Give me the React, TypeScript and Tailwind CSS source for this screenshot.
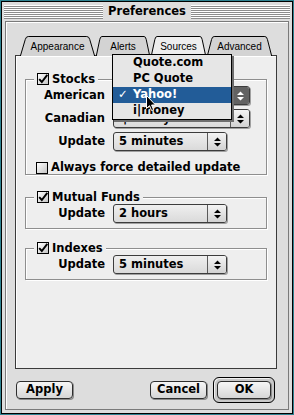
import clsx from "clsx";

const stripes =
  "h-[14px] flex-1 bg-[image:repeating-linear-gradient(to_bottom,#ffffff_0px,#ffffff_1px,#8c8c8c_1px,#8c8c8c_2px)]";

function Check({ on }: { on?: boolean }) {
  return (
    <span className="relative inline-flex h-[12px] w-[12px] shrink-0 border border-black bg-[linear-gradient(135deg,#ffffff,#c4c4c4)]">
      {on ? (
        <svg width="12" height="12" viewBox="0 0 12 12" className="absolute -left-[1px] -top-[1px]">
          <path d="M2.2 6.2 L4.8 9 L10.3 1.8" fill="none" stroke="#000" strokeWidth="1.9" />
        </svg>
      ) : null}
    </span>
  );
}

function Arrows({ light }: { light?: boolean }) {
  return (
    <svg width="7" height="10" viewBox="0 0 7 10">
      <path d="M0 4 L3.5 0.5 L7 4 Z M0 6 L3.5 9.5 L7 6 Z" fill={light ? "#ffffff" : "#000000"} />
    </svg>
  );
}

function Popup({ value, className, pressed }: { value?: string; className: string; pressed?: boolean }) {
  return (
    <div
      className={clsx(
        "flex h-[19px] overflow-hidden rounded-[3px] border border-[#3c3c3c] bg-[linear-gradient(#efefef,#dadada)] shadow-[1px_1px_0_#a0a0a0]",
        className
      )}
    >
      <div className="flex flex-1 items-center pl-[5px] text-[11.5px] font-bold">{value}</div>
      <div
        className={clsx(
          "flex w-[19px] items-center justify-center border-l border-[#5a5a5a]",
          pressed ? "bg-[#626262]" : "bg-[linear-gradient(#f4f4f4,#d2d2d2)]"
        )}
      >
        <Arrows light={pressed} />
      </div>
    </div>
  );
}

function Label({ children }: { children: React.ReactNode }) {
  return <div className="text-right text-[11.5px] font-bold">{children}</div>;
}

function Group({ title, children, className }: { title: string; children: React.ReactNode; className?: string }) {
  return (
    <fieldset className={clsx("w-[242px] border border-[#8e8e8e] shadow-[1px_1px_0_#ffffff,inset_1px_1px_0_#ffffff]", className)}>
      <legend className="ml-[8px] flex items-center gap-[3px] bg-[#eeeeee] px-[3px] text-[11.5px] font-bold leading-[14px]">
        <Check on />
        <span>{title}</span>
      </legend>
      {children}
    </fieldset>
  );
}

function Tab({ label, w, active }: { label: string; w: string; active?: boolean }) {
  return (
    <div className={clsx("relative flex h-[20px] items-center justify-center", w, active && "z-10")}>
      <svg className="absolute inset-0 h-full w-full" viewBox="0 0 100 20" preserveAspectRatio="none">
        <path
          d="M0.5 20 L7 3.5 Q8 0.5 11 0.5 L89 0.5 Q92 0.5 93 3.5 L99.5 20"
          fill={active ? "#eeeeee" : "#d3d3d3"}
          stroke="#000"
          strokeWidth="1"
          vectorEffect="non-scaling-stroke"
        />
      </svg>
      <span className="relative pt-[1px] font-['Liberation_Sans',sans-serif] text-[10px]">{label}</span>
    </div>
  );
}

function Btn({ label, className }: { label: string; className: string }) {
  return (
    <button
      className={clsx(
        "flex h-[18px] items-center justify-center rounded-[4px] border border-[#2e2e2e] bg-[linear-gradient(#f6f6f6,#d6d6d6)] text-[11.5px] font-bold shadow-[1px_1px_0_#8a8a8a]",
        className
      )}
    >
      {label}
    </button>
  );
}

export default function App() {
  return (
    <div className="relative h-[415px] w-[294px] bg-[#2f8391] p-[1px] font-['DejaVu_Sans',sans-serif] text-black">
      <div className="flex h-full flex-col border border-black bg-[#dddddd]">
        <div className="flex h-[19px] items-center gap-[5px] px-[2px]">
          <div className={stripes} />
          <div className="text-[11.5px] font-bold">Preferences</div>
          <div className={stripes} />
        </div>
        <div className="mx-[3px] mb-[3px] flex flex-1 flex-col border border-[#7a7a7a] shadow-[inset_1px_1px_0_#ffffff]">
          <div className="ml-[14px] mt-[14px] -mb-[1px] flex gap-[1px]">
            <Tab label="Appearance" w="w-[75px]" />
            <Tab label="Alerts" w="w-[54px]" />
            <Tab label="Sources" w="w-[55px]" active />
            <Tab label="Advanced" w="w-[65px]" />
          </div>
          <div className="ml-[9px] h-[314px] w-[262px] border border-[#3a3a3a] bg-[#eeeeee] pl-[9px] pt-[16px] shadow-[inset_1px_1px_0_#ffffff]">
            <Group title="Stocks" className="h-[103px]">
              <div className="grid grid-cols-[79px_1fr] items-center gap-x-[8px] gap-y-[4px]">
                <Label>American</Label>
                <Popup className="w-[137px]" pressed />
                <Label>Canadian</Label>
                <Popup className="w-[137px]" value="i|money" />
                <Label>Update</Label>
                <Popup className="w-[114px]" value="5 minutes" />
              </div>
              <div className="ml-[10px] mt-[8px] flex items-center gap-[3px] text-[11.5px] font-bold">
                <Check />
                <span>Always force detailed update</span>
              </div>
            </Group>
            <Group title="Mutual Funds" className="mt-[15px] h-[39px]">
              <div className="grid grid-cols-[79px_1fr] items-center gap-x-[8px]">
                <Label>Update</Label>
                <Popup className="w-[114px]" value="2 hours" />
              </div>
            </Group>
            <Group title="Indexes" className="mt-[12px] h-[39px]">
              <div className="grid grid-cols-[79px_1fr] items-center gap-x-[8px]">
                <Label>Update</Label>
                <Popup className="w-[114px]" value="5 minutes" />
              </div>
            </Group>
          </div>
          <div className="mt-[8px] flex items-center pl-[10px]">
            <Btn label="Apply" className="w-[57px]" />
            <Btn label="Cancel" className="ml-[77px] w-[57px]" />
            <div className="ml-[6px] rounded-[6px] border border-black bg-[#c8c8c8] p-[3px] shadow-[inset_1px_1px_0_#f0f0f0]">
              <Btn label="OK" className="h-[17px] w-[54px]" />
            </div>
          </div>
        </div>
      </div>

      <div className="absolute left-[112px] top-[54px] z-20 w-[120px] border border-black bg-[#e6e6e6] shadow-[2px_2px_0_#6e6e6e] text-[11.5px] font-bold">
        <div className="flex h-[16px] items-center pl-[20px]">Quote.com</div>
        <div className="flex h-[16px] items-center pl-[20px]">PC Quote</div>
        <div className="flex h-[16px] items-center bg-[#225c98] pl-[5px] text-white">
          <span className="w-[15px]">✓</span>Yahoo!
        </div>
        <div className="flex h-[16px] items-center pl-[20px]">i|money</div>
      </div>

      <svg className="absolute left-[146px] top-[95px] z-30" width="11" height="17" viewBox="0 0 11 17">
        <path
          d="M0.5 0.5 L0.5 13.5 L3.5 10.7 L5.6 15.6 L7.6 14.7 L5.6 10 L9.6 10 Z"
          fill="#000"
          stroke="#fff"
          strokeWidth="1"
        />
      </svg>
    </div>
  );
}
